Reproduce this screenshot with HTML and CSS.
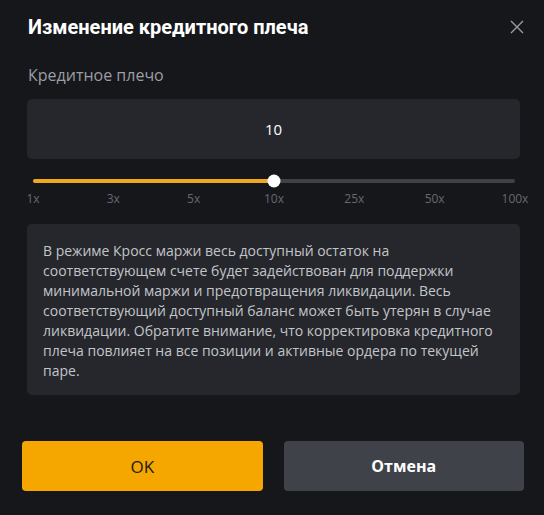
FILE: index.html
```html
<!DOCTYPE html>
<html lang="ru">
<head>
    <meta charset="UTF-8">
    <meta name="viewport" content="width=device-width, initial-scale=1.0">
    <title>Изменение кредитного плеча</title>
    <link rel="stylesheet" href="styles.css">
</head>
<body>
    <div class="dialog">
        <div class="dialog-header">
            <h1 class="dialog-title">Изменение кредитного плеча</h1>
            <button class="close-button" aria-label="Закрыть">
                <svg width="14" height="14" viewBox="0 0 14 14">
                    <path d="M1 1L13 13M13 1L1 13" stroke="#9a9ca2" stroke-width="1.4" fill="none"/>
                </svg>
            </button>
        </div>

        <div class="dialog-body">
            <div class="field-label">Кредитное плечо</div>
            <div class="leverage-input">10</div>

            <div class="slider">
                <div class="slider-track">
                    <div class="slider-fill" style="width: 50%"></div>
                    <div class="slider-thumb" style="left: 50%"></div>
                </div>
                <div class="slider-marks">
                    <span>1x</span>
                    <span>3x</span>
                    <span>5x</span>
                    <span>10x</span>
                    <span>25x</span>
                    <span>50x</span>
                    <span>100x</span>
                </div>
            </div>

            <div class="info-box">
                В режиме Кросс маржи весь доступный остаток на соответствующем счете будет задействован для поддержки минимальной маржи и предотвращения ликвидации. Весь соответствующий доступный баланс может быть утерян в случае ликвидации. Обратите внимание, что корректировка кредитного плеча повлияет на все позиции и активные ордера по текущей паре.
            </div>
        </div>

        <div class="dialog-footer">
            <button class="btn btn-primary">OK</button>
            <button class="btn btn-secondary">Отмена</button>
        </div>
    </div>
</body>
</html>
```

FILE: styles.css
```css
body {
    font-family: 'Open Sans', 'Noto Sans', sans-serif;
    margin: 0;
    padding: 0;
    background-color: #16171b;
    color: #ffffff;
}

.dialog {
    width: 544px;
    height: 515px;
    background-color: #16171b;
}

.dialog-header {
    display: flex;
    justify-content: space-between;
    align-items: center;
    padding: 13px 19px 0 28px;
}

.dialog-title {
    margin: 0;
    font-family: 'Roboto', sans-serif;
    font-size: 20px;
    line-height: 28px;
    font-weight: 700;
    color: #ffffff;
}

.close-button {
    background: none;
    border: none;
    padding: 0;
    width: 16px;
    height: 16px;
    display: flex;
    justify-content: center;
    align-items: center;
    cursor: pointer;
}

.dialog-body {
    padding: 0 24px 0 27px;
}

.field-label {
    margin-top: 24px;
    font-size: 16px;
    line-height: 20px;
    color: #9c9ea3;
    padding-left: 1px;
}

.leverage-input {
    margin-top: 14px;
    height: 60px;
    background-color: #25272c;
    border-radius: 5px;
    display: flex;
    justify-content: center;
    align-items: center;
    font-size: 15px;
    color: #ffffff;
}

.slider {
    padding-top: 20px;
}

.slider-track {
    position: relative;
    height: 4px;
    margin: 0 5px 0 6px;
    background-color: #3f4146;
    border-radius: 2px;
}

.slider-fill {
    height: 100%;
    background-color: #f0a91e;
    border-radius: 2px;
}

.slider-thumb {
    position: absolute;
    top: 50%;
    width: 13px;
    height: 13px;
    background-color: #ffffff;
    border-radius: 50%;
    transform: translate(-50%, -50%);
}

.slider-marks {
    display: flex;
    justify-content: space-between;
    margin: 8px 5px 0 6px;
    font-size: 12px;
    line-height: 16px;
    color: #66696f;
}

.slider-marks span {
    width: 0;
    min-width: 0;
    display: flex;
    justify-content: center;
    white-space: nowrap;
}

.info-box {
    margin-top: 17px;
    background-color: #25272c;
    border-radius: 5px;
    padding: 17px 16px 14px 16px;
    font-size: 14px;
    line-height: 20px;
    color: #c3c5c9;
    height: 140px;
}

.dialog-footer {
    display: flex;
    gap: 21px;
    padding: 46px 20px 0 22px;
}

.btn {
    flex: 1;
    height: 50px;
    border: none;
    border-radius: 4px;
    font-family: inherit;
    font-size: 17px;
    cursor: pointer;
}

.btn-primary {
    background-color: #f5a700;
    color: #1b1a17;
}

.btn-secondary {
    background-color: #404249;
    color: #ffffff;
    font-weight: 700;
    font-size: 16px;
}
```
